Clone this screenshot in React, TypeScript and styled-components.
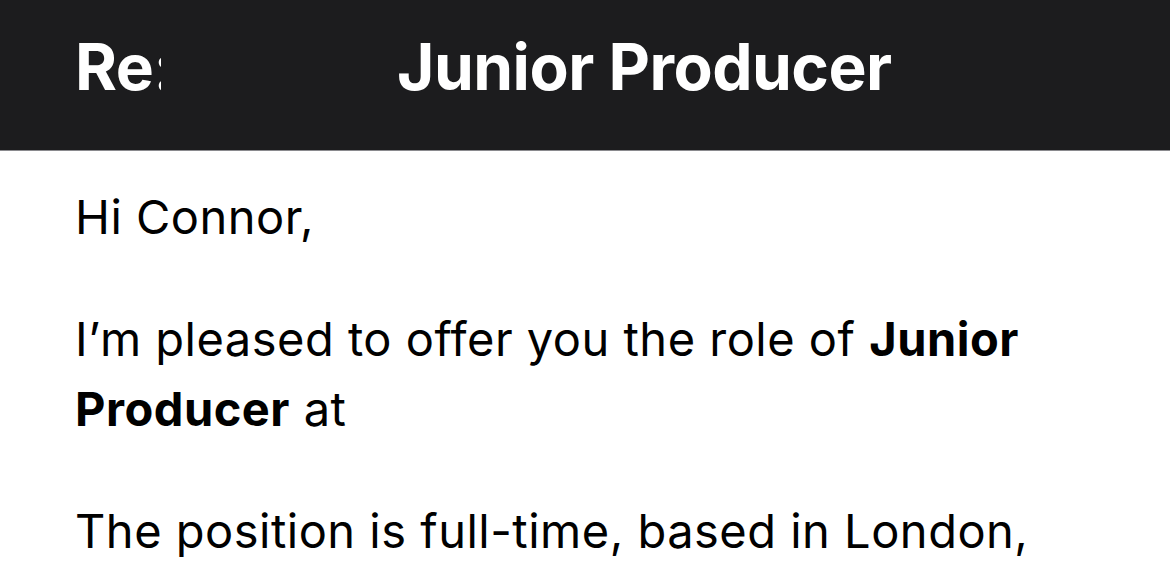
import React from "react";
import styled, { createGlobalStyle } from "styled-components";

const GlobalStyle = createGlobalStyle`
  html, body {
    margin: 0;
    padding: 0;
    background: #ffffff;
  }
  body {
    font-family: Inter, "Noto Sans", "Liberation Sans", sans-serif;
    -webkit-font-smoothing: antialiased;
  }
`;

const Page = styled.div`
  width: 1170px;
  height: 578px;
  overflow: hidden;
  background: #ffffff;
`;

const Header = styled.header`
  height: 151px;
  box-sizing: border-box;
  background: #1c1c1e;
  border-bottom: 1px solid #8a8a8e;
  display: flex;
  align-items: center;
  padding: 0 0 18px 75px;
`;

const Title = styled.h1`
  margin: 0;
  display: flex;
  align-items: center;
  color: #ffffff;
  font-size: 64px;
  font-weight: 700;
  letter-spacing: -0.5px;
  white-space: nowrap;
`;

// the subject was redacted in the screenshot, colon is cut off at the edge
const Prefix = styled.span`
  display: inline-block;
  width: 86px;
  overflow: hidden;
`;

const Redacted = styled.span`
  display: inline-block;
  width: 236px;
`;

const Body = styled.main`
  padding: 31px 75px 0 75px;
  width: 1010px;
  color: #000000;
  font-size: 47px;
  line-height: 70px;
  letter-spacing: 0.5px;
`;

const Para = styled.p`
  margin: 0 0 52px 0;
`;

function App() {
  return (
    <>
      <GlobalStyle />
      <Page>
        <Header>
          <Title>
            <Prefix>Re:</Prefix>
            <Redacted />
            Junior Producer
          </Title>
        </Header>
        <Body>
          <Para>Hi Connor,</Para>
          <Para>
            I’m pleased to offer you the role of <b>Junior Producer</b> at
          </Para>
          <Para>The position is full-time, based in London,</Para>
        </Body>
      </Page>
    </>
  );
}

export default App;
